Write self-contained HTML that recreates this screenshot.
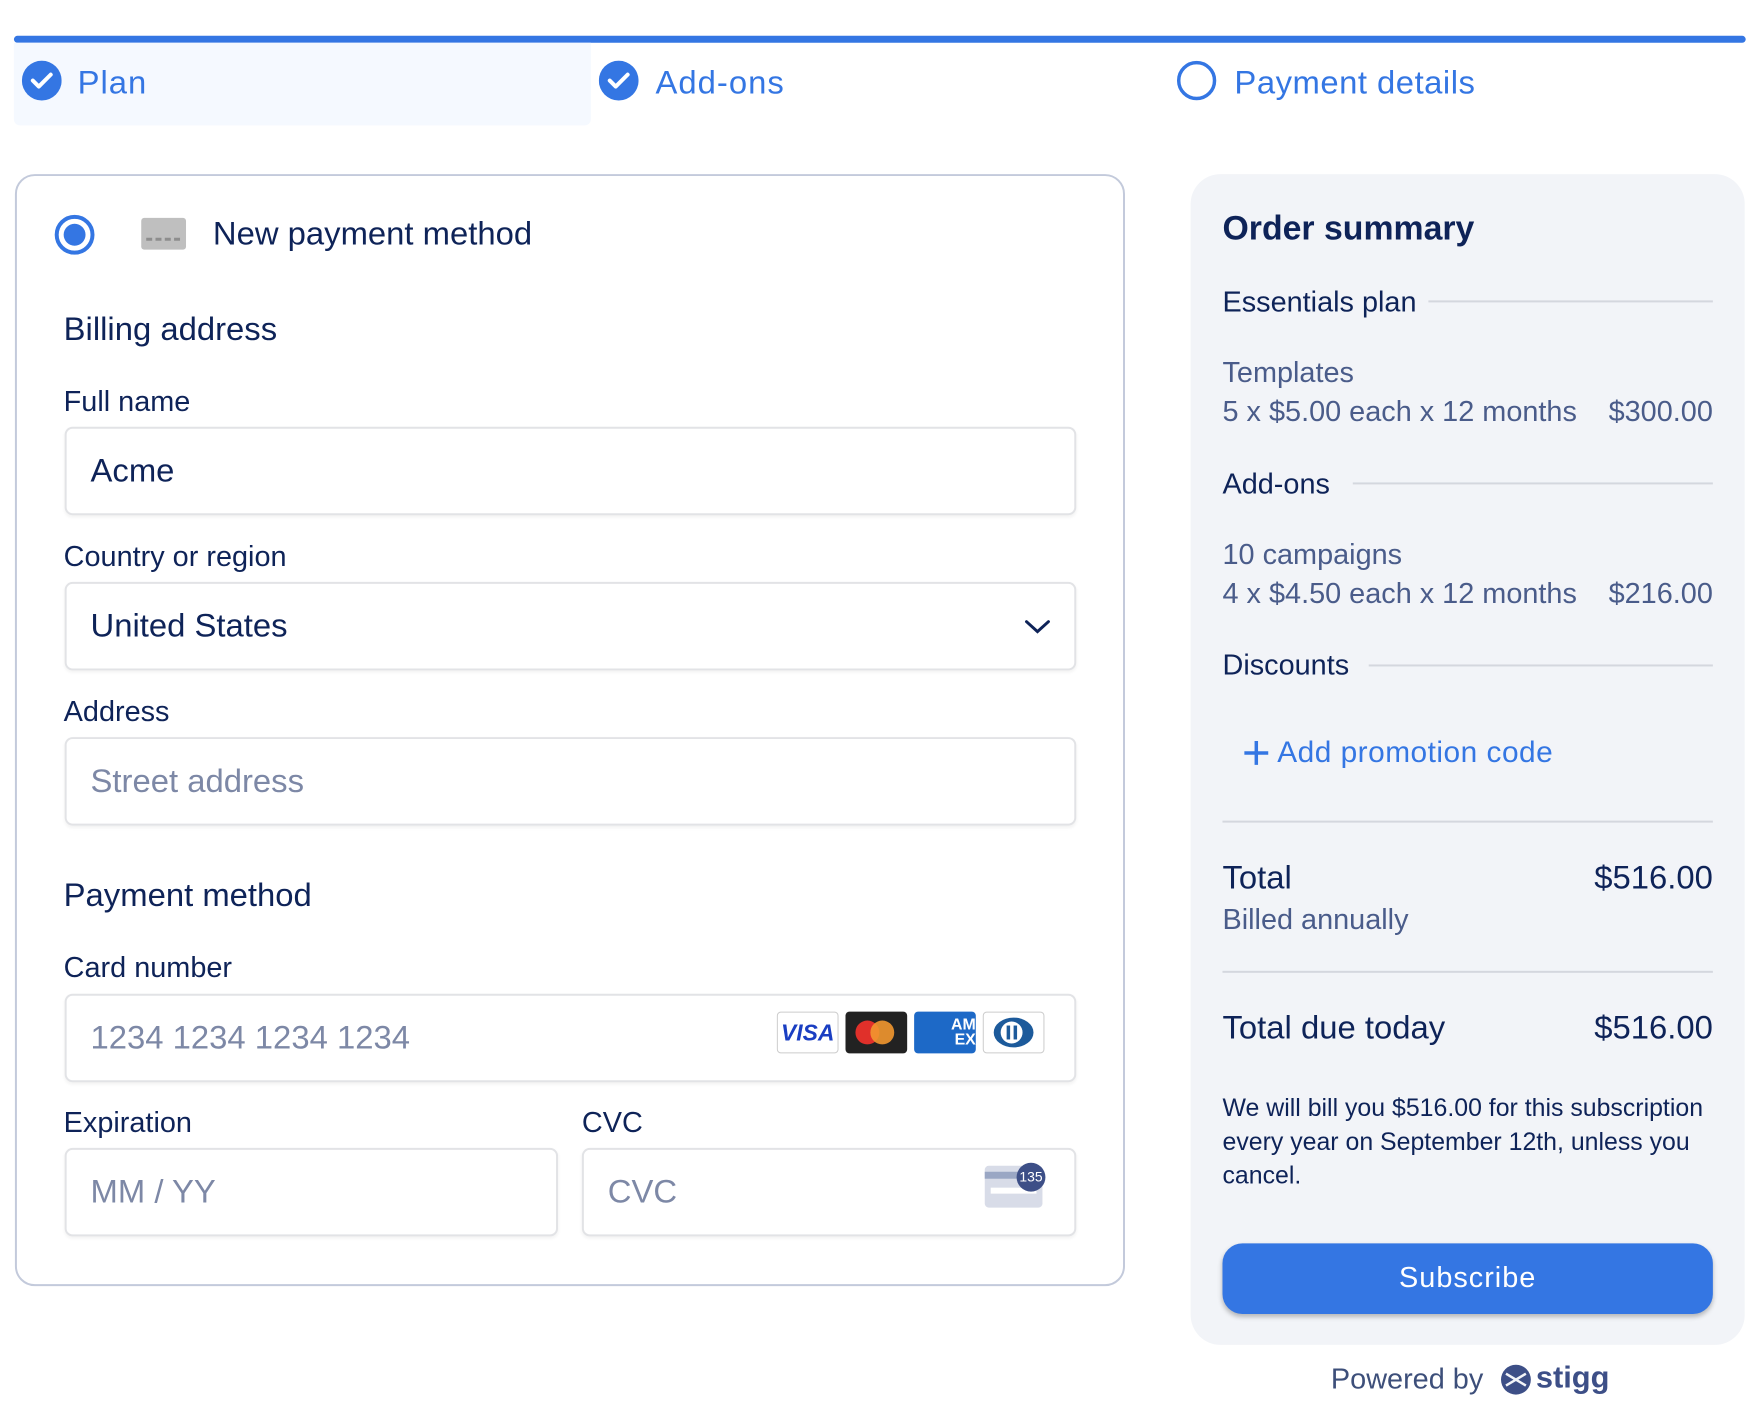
<!DOCTYPE html>
<html><head><meta charset="utf-8"><style>
*{margin:0;padding:0;box-sizing:border-box}
body{width:1764px;height:1414px;background:#fff;font-family:"Liberation Sans",sans-serif;color:#0e2358;position:relative;overflow:hidden}
#w{position:absolute;left:0;top:0;width:1764px;height:1414px;transform:scale(0.9947);transform-origin:0 0}
.a{position:absolute;white-space:nowrap}
.t{position:absolute;white-space:nowrap;height:40px;line-height:40px}
.inp{position:absolute;border:2px solid #e2e3e6;border-radius:8px;background:#fff;box-shadow:0 2px 3px rgba(0,0,0,.05)}
.ph{color:#7d88a6}
.lbl{font-size:29px}
.sep{position:absolute;height:2px;background:#d4d7de}
.g{color:#4a5c8a}
</style></head><body><div id="w">
<div class="a" style="left:14px;top:36px;width:1741px;height:7px;background:#3476e3;border-radius:4px"></div>
<div class="a" style="left:14px;top:43px;width:580px;height:83px;background:#f5f9ff;border-radius:0 0 6px 6px"></div>
<svg class="a" style="left:22px;top:61px" width="40" height="40"><circle cx="20" cy="20" r="20" fill="#3476e3"/><path d="M11 20l6 6 12-12" stroke="#fff" stroke-width="4" fill="none" stroke-linecap="round" stroke-linejoin="round"/></svg>
<div class="t" style="left:78px;top:63px;font-size:33px;color:#3476e3;letter-spacing:1px">Plan</div>
<svg class="a" style="left:602px;top:61px" width="40" height="40"><circle cx="20" cy="20" r="20" fill="#3476e3"/><path d="M11 20l6 6 12-12" stroke="#fff" stroke-width="4" fill="none" stroke-linecap="round" stroke-linejoin="round"/></svg>
<div class="t" style="left:659px;top:63px;font-size:33px;color:#3476e3;letter-spacing:1px">Add-ons</div>
<svg class="a" style="left:1183px;top:61px" width="40" height="40"><circle cx="20" cy="20" r="18" fill="none" stroke="#3476e3" stroke-width="3.5"/></svg>
<div class="t" style="left:1241px;top:63px;font-size:33px;color:#3476e3;letter-spacing:0.5px">Payment details</div>

<div class="a" style="left:15px;top:175px;width:1116px;height:1118px;border:2px solid #c3cadb;border-radius:20px"></div>
<svg class="a" style="left:54px;top:215px" width="42" height="42"><circle cx="21" cy="21" r="18" fill="none" stroke="#3476e3" stroke-width="4"/><circle cx="21" cy="21" r="11" fill="#3476e3"/></svg>
<div class="a" style="left:142px;top:219px;width:45px;height:32px;background:#bfbfbf;border-radius:3px"><div class="a" style="left:5px;top:20px;width:34px;border-top:3px dashed #8d8d8d"></div></div>
<div class="t" style="left:214px;top:215px;font-size:33px">New payment method</div>
<div class="t" style="left:64px;top:311px;font-size:33px">Billing address</div>
<div class="t lbl" style="left:64px;top:384px">Full name</div>
<div class="inp" style="left:65px;top:429px;width:1017px;height:89px"></div>
<div class="t" style="left:91px;top:453px;font-size:33px">Acme</div>
<div class="t lbl" style="left:64px;top:540px">Country or region</div>
<div class="inp" style="left:65px;top:585px;width:1017px;height:89px"></div>
<div class="t" style="left:91px;top:609px;font-size:33px">United States</div>
<svg class="a" style="left:1029px;top:621px" width="28" height="18"><path d="M3 4l11 10 11-10" stroke="#0e2358" stroke-width="3" fill="none" stroke-linecap="round"/></svg>
<div class="t lbl" style="left:64px;top:696px">Address</div>
<div class="inp" style="left:65px;top:741px;width:1017px;height:89px"></div>
<div class="t ph" style="left:91px;top:765px;font-size:33px">Street address</div>
<div class="t" style="left:64px;top:880px;font-size:33px">Payment method</div>
<div class="t lbl" style="left:64px;top:953px">Card number</div>
<div class="inp" style="left:65px;top:999px;width:1017px;height:89px"></div>
<div class="t ph" style="left:91px;top:1023px;font-size:33px">1234 1234 1234 1234</div>
<div class="a" style="left:781px;top:1017px;width:62px;height:42px;border:1.5px solid #ccc;border-radius:4px;background:#fff;color:#1a3ec2;font-weight:bold;font-style:italic;font-size:23px;text-align:center;line-height:40px">VISA</div>
<div class="a" style="left:850px;top:1017px;width:62px;height:42px;border-radius:4px;background:#222"><div class="a" style="left:10px;top:9px;width:24px;height:24px;border-radius:50%;background:#e0302a"></div><div class="a" style="left:25px;top:9px;width:24px;height:24px;border-radius:50%;background:#f2972f;opacity:.9"></div></div>
<div class="a" style="left:919px;top:1017px;width:62px;height:42px;border-radius:4px;background:#1d69c7;color:#fff;font-weight:bold;font-size:16px;line-height:15px;text-align:right;padding:6px 0 0 0;overflow:hidden">AM<br>EX</div>
<div class="a" style="left:988px;top:1017px;width:62px;height:42px;border:1.5px solid #ccc;border-radius:4px;background:#fff"><svg width="59" height="39"><ellipse cx="30" cy="20" rx="20" ry="15" fill="#1c5a9b"/><circle cx="28" cy="20" r="11" fill="#fff"/><rect x="23" y="13" width="3.5" height="14" fill="#1c5a9b"/><rect x="30" y="13" width="3.5" height="14" fill="#1c5a9b"/></svg></div>
<div class="t lbl" style="left:64px;top:1109px">Expiration</div>
<div class="t lbl" style="left:585px;top:1109px">CVC</div>
<div class="inp" style="left:65px;top:1154px;width:496px;height:89px"></div>
<div class="t ph" style="left:91px;top:1178px;font-size:33px">MM / YY</div>
<div class="inp" style="left:585px;top:1154px;width:497px;height:89px"></div>
<div class="t ph" style="left:611px;top:1178px;font-size:33px">CVC</div>
<div class="a" style="left:990px;top:1172px;width:58px;height:42px;background:#d8dce8;border-radius:4px"><div class="a" style="left:0;top:6px;width:58px;height:7px;background:#9aa7c4"></div><div class="a" style="left:6px;top:22px;width:46px;height:6px;background:#fff"></div></div>
<div class="a" style="left:1022px;top:1169px;width:29px;height:29px;border-radius:50%;background:#3d4f87;color:#fff;font-size:14px;text-align:center;line-height:29px">135</div>

<div class="a" style="left:1197px;top:175px;width:557px;height:1177px;background:#f2f4f8;border-radius:30px"></div>
<div class="t" style="left:1229px;top:210px;font-size:34px;font-weight:bold">Order summary</div>
<div class="t" style="left:1229px;top:284px;font-size:29px">Essentials plan</div>
<div class="sep" style="left:1436px;top:302px;width:286px"></div>
<div class="t g" style="left:1229px;top:355px;font-size:29px">Templates</div>
<div class="t g" style="left:1229px;top:394px;font-size:29px">5 x $5.00 each x 12 months</div>
<div class="t g" style="right:42px;top:394px;font-size:29px">$300.00</div>
<div class="t" style="left:1229px;top:467px;font-size:29px">Add-ons</div>
<div class="sep" style="left:1360px;top:485px;width:362px"></div>
<div class="t g" style="left:1229px;top:538px;font-size:29px">10 campaigns</div>
<div class="t g" style="left:1229px;top:577px;font-size:29px">4 x $4.50 each x 12 months</div>
<div class="t g" style="right:42px;top:577px;font-size:29px">$216.00</div>
<div class="t" style="left:1229px;top:649px;font-size:29px">Discounts</div>
<div class="sep" style="left:1376px;top:668px;width:346px"></div>
<svg class="a" style="left:1249px;top:743px" width="28" height="28"><path d="M14 2v24M2 14h24" stroke="#3476e3" stroke-width="3.5"/></svg>
<div class="t" style="left:1284px;top:737px;font-size:30px;color:#3476e3;letter-spacing:0.5px">Add promotion code</div>
<div class="sep" style="left:1229px;top:825px;width:493px"></div>
<div class="t" style="left:1229px;top:862px;font-size:33px">Total</div>
<div class="t" style="right:42px;top:862px;font-size:33px">$516.00</div>
<div class="t g" style="left:1229px;top:905px;font-size:29px">Billed annually</div>
<div class="sep" style="left:1229px;top:976px;width:493px"></div>
<div class="t" style="left:1229px;top:1013px;font-size:33px">Total due today</div>
<div class="t" style="right:42px;top:1013px;font-size:33px">$516.00</div>
<div class="a" style="left:1229px;top:1097px;width:500px;font-size:25px;line-height:34px;white-space:normal">We will bill you $516.00 for this subscription every year on September 12th, unless you cancel.</div>
<div class="a" style="left:1229px;top:1250px;width:493px;height:71px;background:#3476e3;border-radius:20px;box-shadow:0 3px 5px rgba(0,0,0,.25);color:#fff;font-size:29px;text-align:center;line-height:71px;letter-spacing:1px">Subscribe</div>
<div class="t" style="left:1338px;top:1367px;font-size:29px;color:#3d4f7a">Powered by</div>
<svg class="a" style="left:1508px;top:1371px" width="32" height="32"><circle cx="16" cy="16" r="15" fill="#3d4f87"/><path d="M6 10l10 6-10 6M26 10l-10 6 10 6" stroke="#f2f4f8" stroke-width="2.5" fill="none"/></svg>
<div class="t" style="left:1544px;top:1365px;font-size:31px;font-weight:bold;color:#3d4f87">stigg</div>
</div></body></html>
